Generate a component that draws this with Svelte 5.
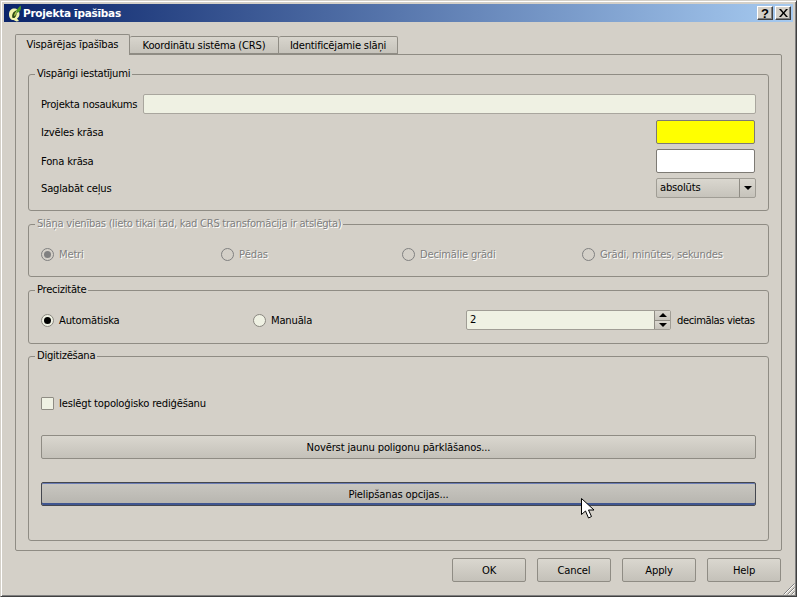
<script>
	const units = ['Metri', 'Pēdas', 'Decimālie grādi', 'Grādi, minūtes, sekundes'];
</script>

<div class="window">
	<div class="titlebar">
		<svg class="logo" width="14" height="17" viewBox="0 0 14 17">
			<path d="M6 3.500C3 3.500 1 6 1 9.500S3 15 5.500 15l3 1.500 2.500-.5-2-2.500c1.500-1 2.500-2.500 2.500-4.500 0-3.500-2.500-5.500-5.500-5.500z" fill="#f2f4ae" />
			<path d="M4.500 13C3.500 10.500 4.500 7 8 5.500c1.200 2.500.5 6-1.500 7.500z" fill="#2f4a14" />
			<path d="M6 10.500C6.500 8.500 7 7.500 8 6.500c.4 1.500 0 3-1 4.500z" fill="#a6c84a" />
			<path d="M8 5.500L12.500 .5c.8 2 .5 4-.5 5.500L9.500 8z" fill="#4f9a26" />
		</svg>
		<span class="title">Projekta īpašības</span>
		<span class="capbtns">
			<button class="capbtn help-cap">?</button>
			<button class="capbtn">
				<svg width="9" height="8" viewBox="0 0 9 8"><path d="M0 0h2l2.500 3L7 0h2L5.500 4 9 8H7L4.500 5 2 8H0l3.500-4z" fill="#000" /></svg>
			</button>
		</span>
	</div>

	<div class="content">
		<div class="tabs">
			<div class="tab active">Vispārējas īpašības</div>
			<div class="tab second">Koordinātu sistēma (CRS)</div>
			<div class="tab third">Identificējamie slāņi</div>
		</div>

		<div class="pane">
			<fieldset class="g1">
				<legend>Vispārīgi iestatījumi</legend>
				<div class="row name-row">
					<span class="name-label">Projekta nosaukums</span>
					<div class="input grow"></div>
				</div>
				<div class="row color-row">
					<span>Izvēles krāsa</span>
					<div class="swatch yellow"></div>
				</div>
				<div class="row color-row second-color">
					<span>Fona krāsa</span>
					<div class="swatch"></div>
				</div>
				<div class="row path-row">
					<span>Saglabāt ceļus</span>
					<div class="combo">
						<span class="combo-text">absolūts</span>
						<span class="combo-arrow"><i class="arrow down"></i></span>
					</div>
				</div>
			</fieldset>

			<fieldset class="g2 disabled">
				<legend>Slāņa vienības (lieto tikai tad, kad CRS transfomācija ir atslēgta)</legend>
				<div class="units">
					{#each units as u, i}
						<label class="radio-label">
							<span class="radio" class:checked={i === 0}></span>
							<span>{u}</span>
						</label>
					{/each}
				</div>
			</fieldset>

			<fieldset class="g3">
				<legend>Precizitāte</legend>
				<div class="prec">
					<label class="radio-label auto">
						<span class="radio checked"></span>
						<span>Automātiska</span>
					</label>
					<label class="radio-label manual">
						<span class="radio"></span>
						<span>Manuāla</span>
					</label>
					<div class="spin">
						<span class="spin-text">2</span>
						<span class="spin-btns">
							<span class="spin-btn"><i class="arrow up"></i></span>
							<span class="spin-btn"><i class="arrow down"></i></span>
						</span>
					</div>
					<span class="dec">decimālas vietas</span>
				</div>
			</fieldset>

			<fieldset class="g4">
				<legend>Digitizēšana</legend>
				<label class="check-label">
					<span class="check"></span>
					<span>Ieslēgt topoloģisko rediģēšanu</span>
				</label>
				<button class="btn wide">Novērst jaunu poligonu pārklāšanos...</button>
				<button class="btn wide hover">Pielipšanas opcijas...</button>
			</fieldset>
		</div>

		<div class="footer">
			<button class="btn foot">OK</button>
			<button class="btn foot">Cancel</button>
			<button class="btn foot">Apply</button>
			<button class="btn foot">Help</button>
		</div>
	</div>

	<svg class="grip" width="13" height="13" viewBox="0 0 13 13">
		<path d="M12.500 1.500L1.500 12.500M12.500 5.500L5.500 12.500M12.500 9.500L9.500 12.500" stroke="#808080" stroke-width="1" fill="none" />
		<path d="M12.500 2.500L2.500 12.500M12.500 6.500L6.500 12.500M12.500 10.500L10.500 12.500" stroke="#fff" stroke-width="1" fill="none" />
	</svg>

	<svg class="cursor" width="14" height="22" viewBox="0 0 14 22">
		<path d="M.5.5v16l4-3.500 3 7 3-1.500-3-6.500h5.500z" fill="#fff" stroke="#000" stroke-width="1" />
	</svg>
</div>

<style>
	:global(body) {
		margin: 0;
		background: #d4d0c8;
	}

	.window {
		position: relative;
		width: 797px;
		height: 597px;
		box-sizing: border-box;
		display: flex;
		flex-direction: column;
		padding: 3px;
		border: 1px solid;
		border-color: #d4d0c8 #404040 #404040 #d4d0c8;
		box-shadow: inset 1px 1px 0 #fff, inset -1px -1px 0 #808080;
		background: #d4d0c8;
		font-family: "DejaVu Sans", sans-serif;
		font-size: 10px;
		letter-spacing: -0.2px;
		color: #000;
	}

	.titlebar {
		height: 18px;
		flex: none;
		display: flex;
		align-items: center;
		background: linear-gradient(to right, #0a246a, #a6caf0);
		color: #fff;
		padding-left: 4px;
	}

	.logo { flex: none; }

	.title {
		margin-left: 1px;
		font-weight: bold;
		font-size: 10.5px;
		letter-spacing: -0.27px;
	}

	.capbtns {
		margin-left: auto;
		margin-right: 2px;
		display: flex;
		gap: 2px;
	}

	.capbtn {
		width: 16px;
		height: 14px;
		padding: 0;
		border: 1px solid;
		border-color: #fff #404040 #404040 #fff;
		box-shadow: inset -1px -1px 0 #808080;
		background: #d4d0c8;
		display: flex;
		align-items: center;
		justify-content: center;
		font-family: "Liberation Sans", sans-serif;
		font-size: 13px;
		font-weight: bold;
		color: #000;
	}

	.content {
		flex: 1;
		padding: 12px 11px 0 11px;
		display: flex;
		flex-direction: column;
	}

	.tabs {
		display: flex;
		align-items: flex-end;
		height: 20px;
		position: relative;
		z-index: 1;
	}

	.tab {
		box-sizing: border-box;
		height: 18px;
		display: flex;
		align-items: center;
		justify-content: center;
		border: 1px solid #8f8c84;
		border-left: none;
		border-radius: 2px 2px 0 0;
		background: linear-gradient(to bottom, #d8d5cd, #c6c3bb);
	}

	.tab.active {
		width: 115px;
		height: 21px;
		margin-bottom: -1px;
		border: 1px solid #8f8c84;
		border-bottom: none;
		background: #d4d0c8;
		padding-bottom: 2px;
	}

	.tab.second { width: 149px; }
	.tab.third { width: 119px; }

	.pane {
		box-sizing: border-box;
		height: 497px;
		border: 1px solid #8f8c84;
		border-radius: 0 2px 2px 2px;
		padding: 12px 12px 0 12px;
		display: flex;
		flex-direction: column;
	}

	fieldset {
		margin: 0;
		padding: 0 12px;
		min-width: 0;
		border: 1px solid #8f8c84;
		border-radius: 3px;
		flex: none;
		box-sizing: border-box;
	}

	legend {
		padding: 0 2px;
		margin-left: -6px;
		line-height: 14px;
		letter-spacing: -0.27px;
	}

	.g1 { height: 144px; }
	.g2 { height: 60px; margin-top: 6px; }
	.g3 { height: 61px; margin-top: 6px; }
	.g4 { height: 192px; margin-top: 5px; }

	.disabled legend,
	.disabled .radio-label {
		color: #808080;
		text-shadow: 1px 1px 0 #fff;
	}

	.row {
		display: flex;
		align-items: center;
		justify-content: space-between;
	}

	.name-row {
		height: 20px;
		margin-top: 13px;
	}

	.name-label {
		width: 102px;
		flex: none;
		white-space: nowrap;
		letter-spacing: -0.25px;
	}

	.color-row {
		height: 24px;
		margin-top: 6px;
	}

	.second-color { margin-top: 5px; }
	.path-row { height: 20px; margin-top: 5px; }

	.input {
		box-sizing: border-box;
		height: 20px;
		border: 1px solid #a9a69e;
		border-radius: 2px;
		background: #eff1e3;
	}

	.grow { flex: 1; }

	.swatch {
		box-sizing: border-box;
		width: 99px;
		height: 24px;
		margin-right: 1px;
		background: #fff;
		border: 1px solid #7d7a74;
		border-radius: 2px;
	}

	.swatch.yellow { background: #ff0; }

	.combo {
		box-sizing: border-box;
		width: 100px;
		height: 20px;
		display: flex;
		border: 1px solid #a09d95;
		border-radius: 2px;
		background: linear-gradient(to bottom, #dad7cf, #c6c3bb);
	}

	.combo-text {
		flex: 1;
		padding-left: 3px;
		line-height: 18px;
	}

	.combo-arrow {
		width: 15px;
		border-left: 1px solid #8f8c84;
		display: flex;
		align-items: center;
		justify-content: center;
	}

	.arrow {
		display: block;
		width: 0;
		height: 0;
		border-left: 4px solid transparent;
		border-right: 4px solid transparent;
	}

	.arrow.down { border-top: 4px solid #000; }
	.arrow.up { border-bottom: 4px solid #000; }

	.units {
		display: grid;
		grid-template-columns: 180px 181px 180px 1fr;
		margin-top: 15px;
		height: 16px;
		align-items: center;
	}

	.radio-label {
		display: flex;
		align-items: center;
		gap: 5px;
	}

	.radio {
		box-sizing: border-box;
		width: 13px;
		height: 13px;
		flex: none;
		border-radius: 50%;
		border: 1px solid #8a8780;
		background: #eff1e3;
		display: flex;
		align-items: center;
		justify-content: center;
	}

	.radio.checked::after {
		content: '';
		width: 7px;
		height: 7px;
		border-radius: 50%;
		background: #000;
	}

	.disabled .radio {
		background: #d4d0c8;
		border-color: #808080;
	}

	.disabled .radio.checked::after {
		background: #808080;
	}

	.prec {
		display: flex;
		align-items: center;
		height: 20px;
		margin-top: 13px;
	}

	.auto { width: 212px; flex: none; }
	.manual { width: 213px; flex: none; }

	.spin {
		box-sizing: border-box;
		width: 205px;
		height: 20px;
		flex: none;
		display: flex;
		border: 1px solid #a09d95;
		border-radius: 2px;
		background: #eff1e3;
	}

	.spin-text {
		flex: 1;
		padding-left: 3px;
		line-height: 18px;
	}

	.spin-btns {
		width: 15px;
		display: flex;
		flex-direction: column;
		border-left: 1px solid #8f8c84;
	}

	.spin-btn {
		flex: 1;
		display: flex;
		align-items: center;
		justify-content: center;
		background: linear-gradient(to bottom, #dad7cf, #c6c3bb);
	}

	.spin-btn + .spin-btn { border-top: 1px solid #8f8c84; }

	.dec {
		margin-left: 6px;
		white-space: nowrap;
		letter-spacing: -0.4px;
	}

	.check-label {
		display: flex;
		align-items: center;
		gap: 5px;
		height: 14px;
		margin-top: 33px;
	}

	.check {
		box-sizing: border-box;
		width: 13px;
		height: 13px;
		border: 1px solid #8f8c84;
		border-radius: 1px;
		background: #eff1e3;
	}

	.btn {
		box-sizing: border-box;
		height: 24px;
		padding: 0;
		border: 1px solid #8f8c84;
		border-radius: 2px;
		background: linear-gradient(to bottom, #dad7cf, #c4c1b9);
		font-family: inherit;
		font-size: inherit;
		letter-spacing: -0.15px;
		color: #000;
	}

	.wide {
		display: block;
		width: 100%;
		margin-top: 25px;
	}

	.wide.hover {
		margin-top: 23px;
		border-color: #44474f;
		box-shadow: inset 0 1px 0 #6a7cb4, inset 0 -2px 0 #3f5590;
		background: linear-gradient(to bottom, #c9c7c1, #b6b4ae);
	}

	.footer {
		display: flex;
		justify-content: flex-end;
		gap: 11px;
		margin-top: 7px;
		padding-right: 1px;
	}

	.foot { width: 74px; }

	.grip {
		position: absolute;
		right: 1px;
		bottom: 1px;
	}

	.cursor {
		position: absolute;
		left: 580px;
		top: 497px;
	}
</style>
